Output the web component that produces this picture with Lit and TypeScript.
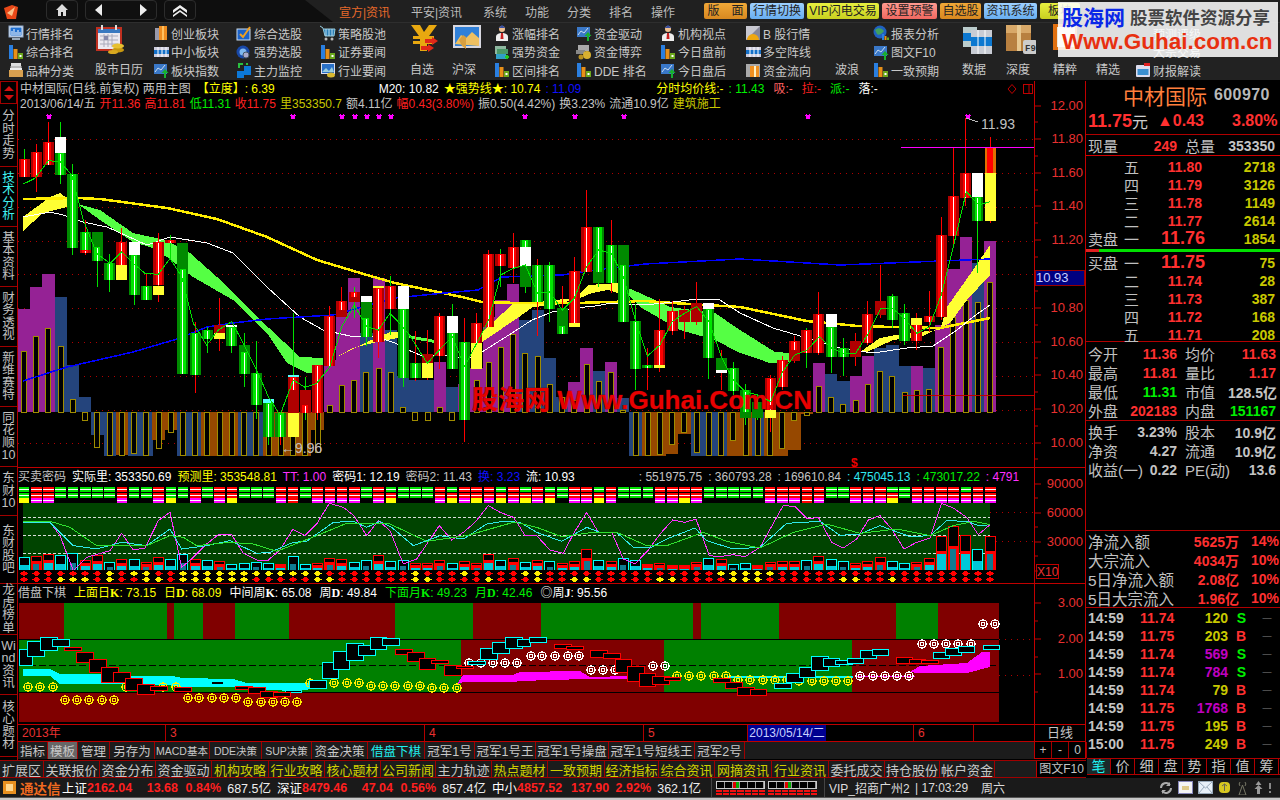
import { LitElement, html, svg, css } from 'lit';
import { customElement } from 'lit/decorators.js';

type Pt = [number, number];

const X = (i: number) => 24 + 12.23 * i;

// zoom coordinates (3x crops) to screen coordinates
const zp = (ox: number, oy: number, a: number[]): Pt[] => {
  const out: Pt[] = [];
  for (let i = 0; i < a.length; i += 2) out.push([ox + a[i] / 3, oy + a[i + 1] / 3]);
  return out;
};
const line = (pts: Pt[], color: string, w = 1) =>
  svg`<polyline points=${pts.map(p => p.join(',')).join(' ')} fill="none" stroke=${color} stroke-width=${w} />`;
const poly = (pts: Pt[], color: string) =>
  svg`<polygon points=${pts.map(p => p.join(',')).join(' ')} fill=${color} />`;

// wick top, wick bottom, wick colour, body segments
const CANDLES: [number, number, string, string][] = [
  [149, 177, 'g', 'R159-177'], [144, 192, 'r', 'R152-177'], [122, 165, 'r', 'R142-165'], [122, 184, 'g', 'W137-153 G153-175'],
  [164, 255, 'g', 'G174-248'], [220, 255, 'r', 'R250-253 G232-250'], [261, 287, 'g', 'g232-247 G247-261'], [254, 292, 'g', 'G263-280'],
  [228, 273, 'r', 'r242-260 Y260-280 R242-265'], [242, 305, 'g', 'W242-255 G255-295'], [273, 300, 'r', 'G286-300'], [233, 302, 'r', 'R242-285 Y286-295'],
  [235, 260, 'g', 'R240-243'], [243, 374, 'g', 'g243-269 G269-374'], [322, 393, 'r', 'G333-375'], [327, 353, 'g', 'G330-339'],
  [298, 351, 'r', 'r325-333 Y333-339'], [325, 353, 'g', 'W325-335 G327-346'], [333, 387, 'g', 'g345-352 G352-374'], [341, 419, 'g', 'G373-405'],
  [399, 445, 'g', 'C399-403 G403-437'], [420, 445, 'r', 'G413-437'], [313, 390, 'g', 'C375-390 R377-390 r390-413 Y413-437'], [377, 420, 'g', 'r390-405 R405-413'],
  [365, 420, 'r', 'R365-413'], [306, 366, 'r', 'R316-366'], [287, 317, 'r', 'r301-317 R301-310'], [287, 318, 'g', 'r292-302 R292-297'],
  [303, 346, 'g', 'W296-302 g302-318 G318-337'], [286, 358, 'r', 'Y286-342 R288-342'], [276, 335, 'g', 'R286-309'], [295, 387, 'g', 'W286-309 G309-378'],
  [331, 381, 'r', 'G363-378'], [330, 380, 'r', 'r354-363 Y363-378'], [313, 369, 'r', 'R316-356'], [304, 369, 'g', 'W316-333 G333-369'],
  [318, 442, 'r', 'G342-420'], [313, 369, 'r', 'R323-343 Y343-369'], [250, 327, 'r', 'R254-327'], [249, 287, 'g', 'R254-266'],
  [233, 283, 'r', 'R247-268'], [240, 293, 'g', 'G240-266 W247-266 g266-287'], [259, 336, 'r', 'G265-302'], [262, 322, 'g', 'G265-309'],
  [286, 308, 'r', 'g308-327 G326-334'], [257, 327, 'r', 'Y323-327 R271-323'], [190, 272, 'r', 'R227-272'], [227, 287, 'g', 'W227-272 G227-272 g272-283'],
  [220, 293, 'r', 'G245-283'], [245, 322, 'g', 'g245-265 G265-322'], [304, 390, 'g', 'G321-369'], [348, 390, 'r', 'G365-368'],
  [299, 372, 'r', 'R330-365 Y365-368'], [301, 335, 'r', 'R311-331'], [306, 339, 'r', 'r310-322'], [282, 325, 'r', 'r303-322'],
  [303, 379, 'g', 'W303-309 G309-358'], [350, 390, 'r', 'g358-370 W370-373'], [362, 395, 'g', 'G368-391'], [384, 425, 'g', 'g390-418 G390-412'],
  [395, 420, 'g', 'g402-418'], [375, 432, 'r', 'R378-410 Y410-418'], [356, 390, 'r', 'R360-387'], [336, 363, 'r', 'r341-361 R341-350'],
  [328, 368, 'g', 'R330-353'], [292, 355, 'r', 'R314-353'], [338, 373, 'g', 'W314-327 G327-357'], [338, 376, 'g', 'G348-357'],
  [333, 366, 'r', 'r341-357'], [301, 345, 'r', 'R314-343'], [265, 318, 'r', 'r301-315'], [294, 328, 'g', 'G296-320'],
  [304, 345, 'g', 'G313-341'], [313, 350, 'r', 'R318-341 Y318-325'], [291, 332, 'r', 'R316-322'], [217, 320, 'r', 'R235-317'],
  [147, 246, 'r', 'R196-236'], [118, 206, 'r', 'R173-198'], [173, 273, 'g', 'W173-197 G197-221'], [137, 223, 'r', 'Y173-221 O147-173'],
];

const BAR_COLOR: Record<string, string> = { p: '#952295', n: '#24447c', o: '#964800' };
// colour and reach from the baseline at y=412
const BARS: [string, number][] = [
  ['p', 309], ['p', 287], ['p', 274], ['n', 297], ['n', 365], ['n', 397], ['n', 435], ['n', 456], ['o', 455], ['n', 456],
  ['n', 456], ['o', 440], ['o', 430], ['n', 456], ['n', 456], ['o', 456], ['o', 456], ['o', 456], ['n', 456], ['n', 456],
  ['o', 456], ['o', 456], ['o', 456], ['o', 456], ['o', 430], ['p', 360], ['p', 313], ['p', 278], ['n', 333], ['p', 278],
  ['n', 330], ['n', 376], ['n', 380], ['n', 380], ['p', 362], ['n', 387], ['p', 384], ['p', 368], ['p', 317], ['p', 300],
  ['p', 284], ['n', 320], ['n', 310], ['n', 358], ['n', 397], ['p', 382], ['p', 348], ['n', 371], ['p', 362], ['n', 398],
  ['n', 456], ['o', 456], ['o', 456], ['o', 454], ['o', 434], ['n', 456], ['n', 456], ['n', 456], ['o', 456], ['o', 456],
  ['n', 456], ['o', 456], ['o', 456], ['o', 450], ['o', 414], ['p', 363], ['n', 374], ['n', 381], ['p', 376], ['p', 356],
  ['n', 348], ['n', 345], ['n', 366], ['p', 366], ['n', 368], ['p', 325], ['p', 269], ['p', 237], ['n', 263], ['p', 241],
];
const OLIVE = [
  351, 336, 328, 346, 399, 420, 447, 455, 455, 453, 455, 448, 432, 455, 455, 455, 455, 455, 455, 455,
  455, 455, 455, 455, 452, 405, 385, 380, 372, 368, 372, 407, 420, 420, 407, 420, 405, 380, 362, 347,
  334, 353, 356, 384, 397, 400, 364, 381, 372, 410, 455, 455, 454, 444, 432, 452, 455, 455, 440, 455,
  455, 455, 448, 420, 415, 386, 397, 404, 400, 384, 371, 376, 392, 390, 389, 347, 317, 300, 302, 282,
];

const RED1 = new Set([1, 2, 8, 11, 14, 16, 17, 21, 22, 24, 25, 26, 27, 29, 34, 36, 37, 38, 40, 42, 45, 46, 48, 52, 53, 54, 55, 61, 62, 63, 64, 65, 68, 69, 70, 73, 74, 75, 76, 78, 79]);
const EXTRA2 = new Set([30, 35, 39, 41, 43, 47, 71, 77]);
const YEL3 = new Set([0, 12, 17, 30, 35, 37, 39, 41, 43, 47, 54, 71]);
const MAG3 = new Set([1, 2, 8, 11, 14, 16, 21, 24, 25, 26, 27, 29, 34, 36, 38, 40, 42, 45, 46, 48, 52, 53, 55, 61, 62, 63, 65, 68, 69, 70, 73, 74, 75, 76, 77, 78, 79]);

// zy of the top of each volume bar, c = cyan outline, r = red outline
const VOL: [number, string][] = [
  [280, 'c'], [276, 'r'], [270, 'r'], [274, 'c'], [268, 'c'], [290, 'r'], [275, 'r'], [295, 'c'], [287, 'r'], [286, 'c'],
  [295, 'r'], [280, 'r'], [286, 'c'], [270, 'c'], [286, 'r'], [288, 'c'], [292, 'r'], [300, 'c'], [298, 'c'], [295, 'c'],
  [298, 'c'], [300, 'r'], [278, 'c'], [300, 'c'], [298, 'r'], [282, 'r'], [286, 'r'], [295, 'c'], [288, 'c'], [274, 'r'],
  [292, 'c'], [288, 'c'], [298, 'r'], [298, 'r'], [288, 'r'], [297, 'c'], [292, 'r'], [298, 'r'], [270, 'r'], [288, 'c'],
  [282, 'r'], [294, 'c'], [288, 'r'], [292, 'c'], [298, 'r'], [292, 'r'], [256, 'r'], [288, 'c'], [292, 'r'], [282, 'c'],
  [288, 'c'], [300, 'r'], [298, 'r'], [304, 'r'], [304, 'r'], [294, 'r'], [282, 'c'], [286, 'r'], [300, 'c'], [298, 'c'],
  [304, 'r'], [294, 'r'], [292, 'r'], [292, 'r'], [288, 'c'], [276, 'r'], [286, 'c'], [292, 'c'], [298, 'r'], [292, 'r'],
  [280, 'r'], [292, 'c'], [298, 'c'], [294, 'r'], [282, 'r'], [216, 'r'], [186, 'r'], [214, 'r'], [256, 'c'], [216, 'r'],
];
const DOT1 = 'RRRRRRRYRYYRRYYYYYYYYYYYYRRRRRRRYRRRYRRRRYYRRRRRRRRRRRRRRYYYYYRRRRRRRRRRRRRRRRRR';
const DOT2 = 'RRRYYYRYRRYYRYYYYYYRRRRRYYRRRRRRYYRRRRYRRRYRRYYRRRRRYYRRRRYYYRRRRRRYYRRYRRRRRRRR';

// x, y, w, h of the boxes in the bottom pane
const BOX_C: number[][] = [
  [19, 650, 13, 16], [27, 642, 17, 15], [40, 638, 17, 13], [52, 640, 17, 7], [285, 691, 16, 2], [309, 681, 17, 8], [322, 663, 16, 16], [333, 652, 16, 18],
  [346, 644, 17, 17], [358, 646, 17, 10], [370, 638, 16, 12], [382, 639, 17, 7], [468, 662, 17, 3], [480, 649, 17, 11], [492, 643, 17, 11], [505, 638, 17, 11],
  [517, 640, 13, 7], [529, 638, 17, 5], [774, 684, 17, 5], [786, 674, 17, 9], [799, 668, 16, 10], [811, 657, 17, 14], [823, 659, 16, 8], [835, 661, 17, 4],
  [847, 659, 16, 5], [860, 651, 16, 8], [872, 650, 16, 6], [933, 653, 16, 6], [945, 649, 16, 7], [958, 647, 16, 6], [983, 646, 16, 4],
];
const BOX_R: number[][] = [
  [64, 648, 17, 3], [76, 653, 17, 10], [89, 660, 17, 13], [101, 668, 17, 15], [113, 673, 17, 10], [125, 679, 17, 12], [137, 685, 17, 10], [150, 687, 17, 4],
  [174, 688, 17, 4], [235, 687, 17, 3], [248, 688, 17, 6], [260, 692, 17, 6], [273, 693, 17, 4], [395, 650, 17, 5], [407, 653, 17, 9], [419, 659, 16, 11],
  [431, 661, 17, 3], [444, 666, 17, 10], [456, 667, 17, 2], [554, 645, 17, 4], [566, 647, 17, 3], [590, 651, 17, 7], [603, 654, 17, 5], [615, 660, 16, 13],
  [627, 667, 17, 15], [639, 674, 16, 13], [652, 677, 17, 8], [664, 678, 16, 3], [713, 679, 17, 4], [725, 683, 17, 6], [737, 688, 17, 8], [750, 690, 16, 6],
  [896, 658, 16, 6], [909, 660, 16, 4], [921, 661, 17, 3],
];
const RINGS_Y: [number, number[]][] = [
  [688, [28, 40, 53, 126, 163, 176]], [701, [65, 77, 89, 102, 114]], [699, [188, 199, 212, 224, 236]], [703, [248, 261, 273, 285, 297]],
  [684, [310, 334, 347, 359]], [687, [371, 383, 395, 408, 420]], [689, [432, 444, 457]],
  [677, [677, 689, 701, 714, 726]], [681, [738, 750, 763, 775, 787]], [682, [799, 812, 824, 836, 848]],
];
const RINGS_W: [number, number[]][] = [
  [664, [469, 481, 493, 505, 517]], [657, [531, 542, 555, 568, 579]], [671, [591, 603, 615]], [667, [653, 665]],
  [677, [860, 873, 885, 897, 909]], [645, [922, 934, 946, 958, 971]], [625, [983, 995]],
];

const segColor: Record<string, string[]> = {
  R: ['#b00000', '#ff0000', '#ffffff'], r: ['#b00000', '#b00000', ''], G: ['#008a00', '#00e600', '#ffffff'], g: ['#008a00', '#008a00', ''],
  W: ['#ffffff', '#ffffff', ''], Y: ['#ffff33', '#ffff33', ''], C: ['#55ffff', '#55ffff', ''], O: ['#e07000', '#ff0000', ''],
};

const candle = (c: [number, number, string, string], i: number) => {
  const x = X(i);
  const segs = [...c[3].matchAll(/([A-Za-z])(\d+)-(\d+)/g)];
  return svg`
    <line x1=${x} x2=${x} y1=${c[0]} y2=${c[1]} stroke=${c[2] === 'r' ? '#ff0000' : '#00e000'} />
    ${segs.map(m => {
      const [edge, mid, core] = segColor[m[1]];
      const t = +m[2];
      const h = +m[3] - t;
      return svg`<rect x=${x - 5.5} y=${t} width="11" height=${h} fill=${edge} />
        <rect x=${x - 3} y=${t} width="6" height=${h} fill=${mid} />
        ${core ? svg`<rect x=${x - 0.5} y=${t + 1} width="1" height=${h - 1} fill=${core} />` : ''}`;
    })}`;
};

const mainChart = () => {
  const grid = [139, 173, 207, 241, 274, 308, 342, 376, 410, 443];
  const marks = [49, 293, 342, 355, 367, 379, 391, 525, 575, 624, 808, 968];
  const green = [
    ...zp(0, 100, [70, 252, 105, 235, 145, 182, 180, 185, 215, 225, 250, 360, 290, 460, 330, 490, 365, 455, 400, 490, 435, 520, 475, 523, 510, 475, 545, 530, 580, 670, 620, 735, 655, 690, 695, 665, 730, 730, 770, 810, 805, 890, 840, 945, 880, 840, 915, 862, 950, 850, 990, 800, 1025, 680, 1063, 615, 1100, 680, 1135, 690, 1170, 640]),
    ...zp(395, 180, [0, 415, 40, 460, 97, 550, 133, 510, 172, 470, 208, 560, 245, 490, 281, 420, 317, 285, 355, 265, 391, 255, 428, 340, 463, 335, 502, 390, 538, 355, 575, 260, 611, 210, 649, 220, 685, 290, 721, 420]),
    ...zp(640, 100, [22, 768, 60, 735, 97, 665, 133, 640, 170, 620, 207, 665, 244, 770, 280, 840, 316, 875, 354, 885, 392, 905, 428, 815, 464, 765, 502, 750, 538, 710, 575, 745, 611, 760, 647, 760, 685, 700, 722, 625, 757, 625, 793, 655, 831, 700, 868, 680, 904, 585, 940, 440, 979, 275, 1016, 315, 1050, 305]),
  ];
  return html`<svg class="chart" viewBox="18 110 1016 358" width="1016" height="358">
    ${grid.map(y => svg`<line x1="18" x2="1034" y1=${y} y2=${y} stroke="#b00000" stroke-dasharray="1 5" />`)}
    ${BARS.map(([c, y], i) => svg`<rect x=${X(i) - 6.1} y=${Math.min(y, 412)} width="12.3" height=${Math.abs(412 - y)} fill=${BAR_COLOR[c]} />`)}
    ${OLIVE.map((y, i) => svg`<rect x=${X(i) - 2.5} y=${Math.min(y, 412)} width="5" height=${Math.abs(412 - y)} fill="#000" stroke="#a08c00" />`)}
    ${poly([[78, 204], [100, 210], [133, 233], [165, 240], [190, 253], [217, 277], [253, 313], [300, 357], [323, 358], [323, 373], [307, 373], [287, 363], [267, 333], [233, 300], [193, 277], [167, 257], [150, 247], [133, 242], [100, 220]], '#55ff44')}
    ${poly([[408, 335], [435, 340], [435, 343], [408, 338]], '#55ff44')}
    ${poly([[628, 288], [640, 293], [670, 307], [715, 313], [740, 330], [775, 352], [790, 353], [790, 362], [770, 363], [740, 353], [715, 340], [680, 330], [640, 307], [628, 295]], '#55ff44')}
    ${poly([[23, 217], [50, 197], [60, 193], [75, 204], [67, 207], [43, 213], [23, 231]], '#ffff33')}
    ${poly([[335, 358], [367, 342], [390, 332], [398, 332], [398, 338], [377, 342], [353, 348]], '#ffff33')}
    ${poly([[482, 332], [513, 304], [555, 300], [575, 298], [588, 285], [618, 283], [625, 288], [625, 295], [608, 290], [592, 293], [580, 298], [555, 305], [533, 307], [519, 317], [488, 338], [482, 342]], '#ffff33')}
    ${poly([[860, 352], [880, 338], [907, 333], [940, 330], [947, 307], [973, 270], [990, 245], [990, 275], [967, 300], [950, 323], [923, 336], [893, 340], [867, 352]], '#ffff33')}
    ${line([[23, 199], [77, 198], [100, 199], [167, 208], [217, 219], [267, 237], [317, 260], [367, 275], [395, 283], [428, 290], [462, 297], [482, 302], [519, 303], [578, 303], [608, 302], [645, 301], [673, 303], [740, 307], [807, 321], [857, 326], [893, 327], [940, 328], [990, 318]], '#ffee00', 2.5)}
    ${line([[23, 217], [50, 212], [63, 215], [83, 222], [107, 227], [147, 245], [170, 237], [207, 243], [233, 253], [267, 287], [300, 317], [323, 330], [350, 336], [377, 337], [395, 343], [408, 350], [420, 355], [435, 355], [470, 358], [482, 352], [512, 333], [532, 320], [552, 312], [575, 308], [595, 306], [612, 303], [645, 305], [673, 302], [697, 299], [720, 300], [740, 313], [773, 328], [807, 338], [840, 348], [873, 353], [907, 348], [933, 346], [957, 330], [973, 317], [990, 305]], '#ffffff')}
    ${line([[23, 381], [67, 367], [133, 352], [177, 339], [207, 327], [233, 323], [267, 319], [333, 315], [395, 298], [445, 293], [478, 290], [502, 277], [562, 275], [595, 270], [645, 264], [740, 259], [840, 265], [940, 261], [990, 259]], '#0000ff', 1.5)}
    ${CANDLES.map(candle)}
    ${line(green, '#00e000')}
    ${marks.map(x => svg`<path d="M${x - 2} 115l4 4m0-4l-4 4" stroke="#ff00ff" stroke-width="1.5" />`)}
    <line x1="901" x2="1034" y1="147" y2="147" stroke="#ff00ff" />
    <line x1="903" x2="1034" y1="395" y2="395" stroke="#c00000" />
    <path d="M966 118l12 4" stroke="#bbb" fill="none" />
    <text x="981" y="129" class="t-grey">11.93</text>
    <text x="281" y="453" class="t-grey">←9.96</text>
    <text x="851" y="467" class="t-s">$</text>
    <text x="472" y="409" class="t-mark">股海网 Www.Guhai.Com.CN</text>
  </svg>`;
};

const midChart = () => {
  const dy = (zy: number) => 465 + zy / 3;
  const mag = [...zp(0, 465, [70, 175, 150, 175, 180, 215, 220, 320, 260, 280, 330, 260, 365, 208, 400, 258, 435, 252, 475, 170, 510, 145, 545, 310, 580, 280, 620, 240, 655, 212, 695, 212, 730, 268, 770, 288, 805, 288, 840, 258, 878, 196, 915, 215, 950, 180, 988, 118, 1030, 130, 1062, 155, 1100, 215, 1135, 170, 1170, 200, 1210, 300, 1250, 285, 1318, 185, 1355, 228, 1390, 205, 1425, 175, 1465, 125, 1500, 145, 1540, 160]),
    ...zp(520, 465, [0, 190, 15, 215, 50, 215, 90, 258, 130, 268, 160, 210, 200, 145, 235, 205, 275, 205, 310, 285, 345, 300, 385, 258, 420, 210, 458, 168, 495, 175, 528, 165, 568, 275, 600, 278, 640, 272, 675, 278, 720, 250, 790, 124, 825, 128, 862, 165, 895, 160, 935, 235, 970, 252, 1010, 225, 1045, 168, 1080, 155, 1115, 195, 1152, 255, 1190, 235, 1230, 222, 1265, 118, 1300, 132, 1340, 160, 1375, 212, 1410, 182])];
  const cyan = [...zp(0, 465, [70, 175, 150, 175, 180, 205, 220, 245, 290, 255, 365, 235, 440, 245, 510, 195, 545, 255, 620, 245, 690, 230, 770, 268, 810, 265, 880, 235, 920, 232, 1000, 175, 1060, 172, 1100, 190, 1140, 172, 1175, 190, 1240, 245, 1320, 215, 1390, 225, 1460, 180, 1510, 172]),
    ...zp(520, 465, [0, 175, 50, 205, 125, 232, 200, 190, 240, 205, 290, 205, 340, 250, 390, 252, 440, 225, 525, 192, 560, 230, 640, 255, 720, 250, 800, 178, 900, 172, 960, 214, 1020, 210, 1080, 185, 1170, 218, 1230, 215, 1280, 170, 1340, 172, 1380, 186, 1410, 182])];
  const grn = [...zp(0, 465, [70, 172, 150, 172, 210, 190, 290, 245, 360, 245, 440, 245, 510, 215, 550, 220, 590, 245, 690, 235, 760, 240, 830, 262, 950, 215, 1040, 178, 1170, 180, 1280, 232, 1400, 215, 1540, 175]),
    ...zp(520, 465, [0, 178, 50, 190, 125, 218, 220, 205, 290, 205, 380, 245, 440, 245, 550, 205, 620, 232, 720, 252, 820, 205, 920, 180, 1020, 208, 1130, 195, 1230, 215, 1300, 185, 1360, 172, 1410, 182])];
  return html`<svg class="chart" viewBox="18 487 1016 97" width="1016" height="97">
    <rect x="23" y="504" width="967" height="67" fill="#004400" />
    ${[513, 542].map(y => svg`<line x1="990" x2="1034" y1=${y} y2=${y} stroke="#b00000" stroke-dasharray="1 5" />`)}
    ${[518, 536, 554].map(y => svg`<line x1="23" x2="990" y1=${y} y2=${y} stroke="#ddd" stroke-dasharray="3 2" />`)}
    ${CANDLES.map((_, i) => {
      const x = X(i) - 5.2;
      const r1 = RED1.has(i);
      const r2 = r1 || EXTRA2.has(i);
      const c3 = YEL3.has(i) ? '#ffff00' : MAG3.has(i) ? '#ff00ff' : i === 22 || i === 64 ? '#ff0000' : '';
      return svg`
        <rect x=${x} y="488" width="10.6" height="5" fill=${r1 ? '#ff0000' : '#00e000'} /><rect x=${x} y="490" width="10.6" height="1" fill="#fff" />
        <rect x=${x} y="494" width="10.6" height="5" fill=${r2 ? '#ff0000' : '#00e000'} /><rect x=${x} y="496" width="10.6" height="1" fill="#fff" />
        ${c3 ? svg`<rect x=${x} y="499" width="10.6" height="5" fill=${c3} /><rect x=${x} y="501" width="10.6" height=${c3 === '#ffff00' ? 0 : 1} fill="#fff" />` : ''}`;
    })}
    ${VOL.map(([zy, c], i) => {
      const x = X(i) - 5;
      const top = dy(zy);
      const fillTop = (top + 571) / 2 + 1;
      const teal = i % 3 === 1;
      return svg`<rect x=${x} y=${top} width="10" height=${571 - top} fill="#000" stroke=${c === 'c' ? '#00ffff' : '#ff0000'} />
        ${c === 'r' ? svg`<rect x=${x} y=${fillTop - 3} width="10" height=${574 - fillTop} fill="#ff0000" />` : ''}
        <rect x=${x + (teal ? 2 : 0.5)} y=${fillTop} width=${teal ? 6 : 9} height=${571 - fillTop} fill=${teal ? '#107a90' : '#00c8d8'} />`;
    })}
    ${line(mag, '#ff30ff')}
    ${line(cyan, '#30e8e8')}
    ${line(grn, '#30e030')}
    <rect x="18" y="571" width="978" height="13" fill="#000" />
    ${CANDLES.map((_, i) => svg`
      <path d="M${X(i) - 4} 574.5l4-3 4 3-4 3z" fill=${DOT1[i] === 'R' ? '#ff0000' : '#ffee00'} />
      <path d="M${X(i) - 4} 580.5l4-3 4 3-4 3z" fill=${DOT2[i] === 'R' ? '#ff0000' : '#ffee00'} />`)}
  </svg>`;
};

const lowChart = () => {
  const topGreen = [[64, 103], [174, 29], [235, 54], [395, 78], [541, 152], [701, 78], [896, 42]];
  const ring = (x: number, y: number, c: string) => svg`<circle cx=${x} cy=${y} r="4" fill="none" stroke=${c} stroke-width="1.3" /><circle cx=${x} cy=${y} r="1.8" fill="none" stroke=${c} />`;
  const box = (b: number[], c: string) => svg`<rect x=${b[0]} y=${b[1]} width=${b[2]} height=${b[3]} fill="#000" stroke=${c} />`;
  return html`<svg class="chart" viewBox="18 603 1016 122" width="1016" height="122">
    <rect x="19" y="604" width="980" height="119" fill="#800000" />
    ${topGreen.map(g => svg`<rect x=${g[0]} y="604" width=${g[1]} height="36" fill="#008000" />`)}
    <rect x="19" y="640" width="442" height="53" fill="#008000" />
    <rect x="664" y="640" width="188" height="53" fill="#008000" />
    ${[640, 676].map(y => svg`<line x1="999" x2="1034" y1=${y} y2=${y} stroke="#b00000" stroke-dasharray="1 5" />`)}
    <line x1="19" x2="999" y1="640" y2="640" stroke="#000" />
    <line x1="19" x2="999" y1="666" y2="666" stroke="#000" stroke-dasharray="7 3" />
    <line x1="19" x2="999" y1="693" y2="693" stroke="#000" />
    ${poly([[23, 670], [50, 670], [60, 675], [100, 675], [133, 677], [173, 677], [182, 679], [233, 680], [247, 684], [313, 684], [313, 690], [293, 692], [247, 690], [233, 688], [182, 688], [167, 686], [123, 685], [60, 685], [50, 677], [23, 677]], '#00ffff')}
    ${poly([[457, 685], [463, 676], [513, 676], [520, 673], [580, 672], [590, 678], [630, 677], [630, 680], [585, 680], [520, 682], [513, 683], [463, 683]], '#ff00ff')}
    ${poly([[910, 673], [920, 667], [967, 664], [982, 653], [990, 653], [990, 668], [967, 674], [917, 674]], '#ff00ff')}
    <rect x="727" y="677" width="126" height="2" fill="#00ffff" />
    <rect x="855" y="677" width="60" height="1" fill="#ff00ff" />
    ${RINGS_Y.map(([y, xs]) => xs.map(x => ring(x, y, '#ffee00')))}
    ${RINGS_W.map(([y, xs]) => xs.map(x => ring(x, y, '#ffffff')))}
    <rect x="212" y="683" width="11" height="2" fill="#000" />
    ${BOX_C.map(b => box(b, '#00ffff'))}
    ${BOX_R.map(b => box(b, '#ff0000'))}
  </svg>`;
};

const axis = (y0: number, h: number, labels: [string, number][], ticks: number[]) => html`
  <svg class="axis" viewBox="1034 ${y0} 52 ${h}" width="52" height=${h}>
    <line x1="1034.5" x2="1034.5" y1=${y0} y2=${y0 + h} stroke="#c00000" />
    <line x1="1085.5" x2="1085.5" y1=${y0} y2=${y0 + h} stroke="#c00000" />
    ${ticks.map(y => svg`<line x1="1034" x2="1038" y1=${y} y2=${y} stroke="#c00000" />`)}
    ${labels.map(([t, y]) => svg`<line x1="1034" x2="1041" y1=${y} y2=${y} stroke="#c00000" /><text x="1083" y=${y + 4} text-anchor="end" class="t-axis">${t}</text>`)}
  </svg>`;

/* ---- small toolbar icons ---- */
const ic = (body: unknown, w = 16, h = 16, vb = '0 0 16 16') => html`<svg class="ic" width=${w} height=${h} viewBox=${vb}>${body}</svg>`;
const ICONS: Record<string, unknown> = {
  monitor: ic(svg`<rect x="1" y="1" width="14" height="11" fill="#dfe8f5" stroke="#8fa9cc"/><rect x="2.5" y="2.5" width="11" height="8" fill="#1f6fd0"/><path d="M4 10V6m2 4V4m2 6V7m2 3V5m2 5V7" stroke="#fff"/><rect x="4" y="13" width="8" height="2" fill="#9ab"/>`),
  bars: ic(svg`<rect x="1" y="1" width="4" height="14" fill="#2a7fe0"/><rect x="5.5" y="5" width="4" height="10" fill="#e89018"/><rect x="10" y="9" width="5" height="6" fill="#6aa81c"/><rect x="11.5" y="11" width="2" height="2" fill="#fff"/>`),
  box: ic(svg`<rect x="1" y="8" width="14" height="7" fill="#d8a050"/><rect x="3" y="1" width="10" height="3" fill="#ddd"/><rect x="2.5" y="4" width="11" height="2" fill="#bbb"/><rect x="2" y="6" width="12" height="2" fill="#eee"/>`),
  doc: ic(svg`<rect x="2" y="3" width="12" height="12" fill="#99a"/><rect x="6" y="1" width="8" height="14" fill="#ee8c20"/><rect x="9" y="1" width="2" height="14" fill="#ffc060"/>`),
  table: ic(svg`<rect x="1" y="3" width="15" height="10" fill="#ccd"/><rect x="1" y="6" width="15" height="4" fill="#1470c8"/><path d="M5 3v10m4-10v10m4-10v10" stroke="#fff"/>`),
  up: ic(svg`<rect x="1" y="2" width="13" height="10" fill="#3a78c8"/><path d="M2 10l3-4 3 2 4-5" stroke="#cde" fill="none"/><path d="M11 16V11H8.5L12 7l3.500 4H13v5z" fill="#18b030"/>`),
  check: ic(svg`<rect x="1" y="4" width="13" height="11" fill="#1c62c8" stroke="#cde"/><path d="M4 9l3 3 7-10" stroke="#f0a020" stroke-width="2" fill="none"/>`),
  globe: ic(svg`<circle cx="7" cy="8" r="6.500" fill="#1848a8"/><circle cx="7" cy="8" r="3.500" fill="#7fb8ef"/><circle cx="10" cy="11" r="3" fill="#aac" stroke="#456"/>`),
  flow: ic(svg`<rect x="1" y="9" width="7" height="7" fill="#0c78d8"/><rect x="8" y="4" width="7" height="9" fill="#0c78d8"/><path d="M3 6V2h4M11 3V1" stroke="#2ac040" stroke-width="2" fill="none"/>`),
  cart: ic(svg`<path d="M0 1l3 2 2 8h9l1-7H4" fill="#2a7fb8" stroke="#9cd"/><path d="M6 4v7m3-7v7m3-7v7" stroke="#bde"/><circle cx="6" cy="14" r="1.500" fill="#bbb"/><circle cx="12" cy="14" r="1.500" fill="#bbb"/>`),
  gold: ic(svg`<rect x="1" y="1" width="14" height="11" fill="#dde" /><rect x="2" y="2" width="12" height="9" fill="#2a70c8"/><path d="M2 10l4-4 3 3 3-4 2 5z" fill="#9cd"/><ellipse cx="11" cy="13" rx="4" ry="2.500" fill="#d8b830"/>`),
  person: ic(svg`<circle cx="8" cy="4" r="3" fill="#f0c090"/><path d="M4.500 3l3.500-3 3.500 3z" fill="#3a50a0"/><path d="M2 16v-4c0-3 3-4 6-4s6 1 6 4v4z" fill="#eee"/><path d="M7 8h2l.5 6H6.500z" fill="#c82020"/>`),
  cash: ic(svg`<rect x="1" y="2" width="11" height="8" fill="#8fb8a0"/><rect x="3" y="5" width="11" height="5" fill="#4a9868"/><rect x="2" y="10" width="10" height="5" fill="#30a0c8"/><path d="M11 13h4m-2-2v4" stroke="#2c2" stroke-width="2"/>`),
  coins: ic(svg`<rect x="2" y="1" width="11" height="6" fill="#aaa"/><rect x="0" y="6" width="9" height="4" fill="#888"/><circle cx="11" cy="11" r="4" fill="#d8b030"/><circle cx="5" cy="13" r="2.500" fill="#b89020"/>`),
  sun: ic(svg`<rect x="1" y="1" width="14" height="14" fill="#c8c8d0"/><path d="M1 15L15 1v14z" fill="#889"/><path d="M2 15a6 6 0 0112 0z" fill="#f0a810"/>`),
  orange: ic(svg`<rect x="1" y="2" width="14" height="13" fill="#aaa"/><rect x="5" y="4" width="9" height="11" fill="#f09020"/><rect x="9" y="4" width="2" height="11" fill="#fff0c0"/>`),
  ball: ic(svg`<circle cx="7" cy="7" r="6.500" fill="#2060c0"/><path d="M2 5c3-3 7-2 9 1-2 3-6 5-7 3z" fill="#40a060"/><rect x="9" y="9" width="2" height="6" fill="#2a7fe0"/><rect x="11.500" y="11" width="2" height="4" fill="#e89018"/><rect x="14" y="12.500" width="2" height="2.500" fill="#6aa81c"/>`),
  report: ic(svg`<rect x="1" y="3" width="14" height="12" rx="1" fill="#dde"/><rect x="2.500" y="7" width="11" height="6" fill="#3a8fd0"/><rect x="9" y="1" width="6" height="3" fill="#e02020"/>`),
};

const BIG: Record<string, unknown> = {
  cal: ic(svg`<rect x="1" y="3" width="26" height="24" fill="#c03020"/><rect x="3" y="5" width="22" height="20" fill="#ece8f0"/><rect x="3" y="5" width="22" height="4" fill="#3a78c0"/>
    <path d="M7 1v5m14-5v5" stroke="#ddd" stroke-width="2"/><path d="M5 12h18M5 16h18M5 20h18M9 10v13m4-13v13m4-13v13" stroke="#aab"/><rect x="9" y="12" width="4" height="4" fill="#88a"/>
    <ellipse cx="23" cy="26" rx="6" ry="2.500" fill="#c89810"/><ellipse cx="23" cy="22" rx="6" ry="2.500" fill="#e8c030"/><ellipse cx="18" cy="28" rx="5" ry="2" fill="#d8a820"/>`, 30, 30, '0 0 30 30'),
  yen: ic(svg`<path d="M1 1h9l4 7 5-7h8l-8 11h5v3h-7v2h7v3h-7v7h-7v-7H3v-3h7v-2H3v-3h6z" fill="#e8a810"/><path d="M15 15h7v-2l6 4-6 4v-2h-7zM11 22h7v-2l6 4-6 4v-2h-7z" fill="#e02818"/>`, 30, 30, '0 0 30 30'),
  map: ic(svg`<rect x="1" y="1" width="28" height="23" fill="#d8d8e0"/><rect x="3" y="3" width="24" height="19" fill="#3080d8"/><path d="M3 20l6-9 5 3 6-6 7 6v8z" fill="#eec060"/><path d="M7 16l4-5 3 2v12l-4-3z" fill="#d8a040"/>`, 30, 30, '0 0 30 30'),
  data: ic(svg`<rect x="1" y="3" width="14" height="20" fill="#bcc"/><rect x="1" y="9" width="14" height="8" fill="#0c78d0"/><rect x="9" y="6" width="21" height="24" fill="#c8ccd4"/><rect x="9" y="13" width="21" height="9" fill="#0c78d0"/><path d="M16 6v24m7-24v24" stroke="#fff"/>`, 30, 30, '0 0 30 30'),
  pack: ic(svg`<rect x="0" y="1" width="25" height="26" fill="#b88040"/><rect x="0" y="1" width="25" height="8" fill="#d8a868"/><rect x="11" y="1" width="4" height="26" fill="#e8c890"/><rect x="17" y="16" width="14" height="14" rx="2" fill="#ccc"/><text x="19" y="27" font-size="9" font-weight="700" fill="#333" font-family="Liberation Mono">F9</text>`, 30, 30, '0 0 30 30'),
  note: ic(svg`<rect x="0" y="0" width="24" height="26" fill="#e07010"/><rect x="4" y="3" width="18" height="20" fill="#f0e8d8"/>`, 26, 30, '0 0 26 30'),
};

const RIBBON: ([string, string][] | [string, string])[] = [
  [['monitor', '行情排名'], ['bars', '综合排名'], ['box', '品种分类']],
  ['cal', '股市日历'],
  [['doc', '创业板块'], ['table', '中小板块'], ['up', '板块指数']],
  [['check', '综合选股'], ['globe', '强势选股'], ['flow', '主力监控']],
  [['cart', '策略股池'], ['bars', '证券要闻'], ['gold', '行业要闻']],
  ['yen', '自选'],
  ['map', '沪深'],
  [['person', '涨幅排名'], ['cash', '强势资金'], ['bars', '区间排名']],
  [['up', '资金驱动'], ['coins', '资金博弈'], ['bars', 'DDE 排名']],
  [['person', '机构视点'], ['bars', '今日盘前'], ['up', '今日盘后']],
  [['sun', 'B 股行情'], ['table', '多空阵线'], ['orange', '资金流向']],
  ['', '波浪'],
  [['ball', '报表分析'], ['up', '图文F10'], ['bars', '一致预期']],
  ['data', '数据'],
  ['pack', '深度'],
  ['note', '精粹'],
  ['', '精选'],
  [['', '预测评级'], ['', '大宗交易'], ['report', '财报解读']],
];

const SIDE: [string[], number, boolean?][] = [
  [['分', '时', '走', '势'], 63], [['技', '术', '分', '析'], 60, true], [['基', '本', '资', '料'], 60], [['财', '务', '透', '视'], 60],
  [['新', '维', '赛', '特'], 60], [['同', '花', '顺', '10'], 60], [['东', '财', '10'], 49], [['东', '财', '股', '吧'], 68],
  [['龙', '虎', '榜', '单'], 51], [['Wi', 'nd', '资', '讯'], 60], [['核', '心', '题', '材'], 62],
];

const TAB1: [string, number, string?][] = [
  ['指标', 30], ['模板', 30, 'sel'], ['管理', 32], ['另存为', 45], ['MACD基本', 55, 'nr'], ['DDE决策', 52, 'nr'], ['SUP决策', 50, 'nr'], ['资金决策', 56], ['借盘下棋', 57, 'cy'],
  ['冠军1号', 50], ['冠军1号王', 61], ['冠军1号操盘', 73], ['冠军1号短线王', 86], ['冠军2号', 50],
];
const TAB2: [string, number, string?][] = [
  ['扩展区', 44], ['关联报价', 56], ['资金分布', 56], ['资金驱动', 56], ['机构攻略', 57, 'ol'], ['行业攻略', 56, 'ol'], ['核心题材', 56, 'ol'], ['公司新闻', 55, 'ol'], ['主力轨迹', 56],
  ['热点题材', 56, 'ol'], ['一致预期', 57, 'ol'], ['经济指标', 54, 'ol'], ['综合资讯', 56, 'ol'], ['网摘资讯', 57, 'ol'], ['行业资讯', 57, 'ol'], ['委托成交', 56], ['持仓股份', 55], ['帐户资金', 55],
];

const TOPBTN: [string, string, number][] = [
  ['版　面', 'b-or', 43], ['行情切换', 'b-bl', 54], ['VIP闪电交易', 'b-ye', 72], ['设置预警', 'b-pk', 55], ['自选股', 'b-or', 41], ['资讯系统', 'b-bl', 53], ['板块', 'b-ye', 40],
];

const ASKS: [string, string, string, string?][] = [
  ['', '五', '11.80', '2718'], ['', '四', '11.79', '3126'], ['', '三', '11.78', '1149'], ['', '二', '11.77', '2614'], ['卖盘', '一', '11.76', '1854'],
];
const BIDS: [string, string, string, string?][] = [
  ['买盘', '一', '11.75', '75'], ['', '二', '11.74', '28'], ['', '三', '11.73', '387'], ['', '四', '11.72', '168'], ['', '五', '11.71', '208'],
];
const STATS: [string, string, string, string, string, string][] = [
  ['今开', '11.36', 'red', '均价', '11.63', 'red'], ['最高', '11.81', 'red', '量比', '1.17', 'red'],
  ['最低', '11.31', 'grn', '市值', '128.5亿', 'gry'], ['外盘', '202183', 'red', '内盘', '151167', 'grn'],
];
const STATS2: [string, string, string, string][] = [
  ['换手', '3.23%', '股本', '10.9亿'], ['净资', '4.27', '流通', '10.9亿'], ['收益(一)', '0.22', 'PE(动)', '13.6'],
];
const FLOW: [string, string, string][] = [
  ['净流入额', '5625万', '14%'], ['大宗流入', '4034万', '10%'], ['5日净流入额', '2.08亿', '10%'], ['5日大宗流入', '1.96亿', '10%'],
];
const TRADES: [string, string, string, string, string][] = [
  ['14:59', '11.74', '120', 'S', 'ol'], ['14:59', '11.75', '203', 'B', 'ol'], ['14:59', '11.74', '569', 'S', 'mg'], ['14:59', '11.74', '784', 'S', 'mg'],
  ['14:59', '11.74', '79', 'B', 'ol'], ['14:59', '11.75', '1768', 'B', 'mg'], ['14:59', '11.75', '195', 'B', 'ol'], ['15:00', '11.75', '249', 'B', 'ol'],
];

@customElement('app-root')
export class AppRoot extends LitElement {
  private renderRibbon() {
    return html`<div class="ribbon">
      ${RIBBON.map(col => {
        if (typeof col[0] === 'string') {
          const [k, t] = col as [string, string];
          return html`<div class="rb-big"><div class="rb-img">${BIG[k] ?? ''}</div><span>${t}</span></div>`;
        }
        return html`<div class="rb-col">
          ${(col as [string, string][]).map(([k, t]) => html`<div class="rb-row"><i class="rb-ic">${ICONS[k] ?? ''}</i><span>${t}</span></div>`)}
        </div>`;
      })}
    </div>`;
  }

  private renderTop() {
    return html`<div class="top">
      <svg class="logo" width="16" height="16" viewBox="0 0 16 16"><path d="M1 4l8-3 6 2-2 12-9 0z" fill="#e84818"/><path d="M4 9l8-6-3 9z" fill="#f8c088"/></svg>
      <div class="navs">
        <button class="nv nv-1">
          <svg width="14" height="14" viewBox="0 0 14 14"><path d="M7 1l6 6h-2v6H8V9H6v4H3V7H1z" fill="#ddd"/></svg>
        </button>
        <button class="nv nv-2">
          <svg width="10" height="14" viewBox="0 0 10 14"><path d="M8 1v12L1 7z" fill="#eee"/></svg>
          <svg width="10" height="14" viewBox="0 0 10 14"><path d="M2 1v12l7-6z" fill="#eee"/></svg>
        </button>
        <button class="nv nv-1">
          <svg width="16" height="14" viewBox="0 0 16 14"><path d="M1 7l7-5 7 5v3L8 5l-7 5zM1 12l7-5 7 5v2L8 9l-7 5z" fill="#eee"/></svg>
        </button>
      </div>
      <div class="menu">
        <span class="m-on">宣方|资讯</span><span class="m-2">平安|资讯</span>
        ${['系统', '功能', '分类', '排名', '操作'].map(t => html`<span class="m-i">${t}</span>`)}
      </div>
      <div class="btns">
        ${TOPBTN.map(([t, c, w]) => html`<span class=${`tb ${c}`} style="width:${w}px">${t}</span>`)}
      </div>
    </div>`;
  }

  private renderHeaders() {
    return html`<div class="hd hd-main">
      <div class="hd-l">
        <span class="gy">中材国际(日线.前复权) 两用主图</span>
        <span class="ye hg1">【立度】: 6.39</span>
        <span class="wh hg2">M20: 10.82</span>
        <span class="ye hg3">★强势线★: 10.74</span>
        <span class="bl hg3">: 11.09</span>
        <span class="ye hg4">分时均价线:-</span>
        <span class="gn hg3">: 11.43</span>
        <span class="pk hg6">吸:-</span>
        <span class="rd hg6">拉:-</span>
        <span class="gn hg6">派:-</span>
        <span class="wh hg6">落:-</span>
        <svg class="hd-ctl" width="26" height="10" viewBox="0 0 26 10"><path d="M5 .5l4 4.500-4 4.500L1 5z" fill="none" stroke="#c00000"/><rect x="16.500" y=".5" width="9" height="9" fill="none" stroke="#c00000"/><path d="M22 0v10" stroke="#c00000"/></svg>
      </div>
      <div class="hd-l l2">
        <span class="gy">2013/06/14/五</span>
        <span class="rd hg3">开11.36</span><span class="rd hg3">高11.81</span><span class="gn hg3">低11.31</span><span class="rd hg3">收11.75</span>
        <span class="ol hg3">里353350.7</span><span class="gy hg3">额4.11亿</span><span class="rd hg3">幅0.43(3.80%)</span>
        <span class="gy hg3">振0.50(4.42%)</span><span class="gy hg3">换3.23%</span><span class="gy hg3">流通10.9亿</span><span class="ol hg3">建筑施工</span>
      </div>
    </div>`;
  }

  private renderRight() {
    const ob = (rows: [string, string, string, string?][]) => rows.map(([l, n, p, v]) => html`
      <div class="ob ${n === '一' ? 'ob-best' : ''}">
        <span class="lb">${l}</span><span class="ob-n">${n}</span><span class="ob-p">${p}</span><span class="ob-v">${v}</span>
      </div>`);
    return html`<aside class="right">
      <div class="r-title"><span class="r-name">中材国际</span><span class="r-code">600970</span></div>
      <div class="r-quote sep">
        <span class="q-p">11.75</span><span class="q-y">元</span><span class="q-c">▲0.43</span><span class="q-r">3.80%</span>
      </div>
      <div class="r-vol sep"><span class="lb">现量</span><b class="red">249</b><span class="lb r-l2">总量</span><b class="gry">353350</b></div>
      <div class="r-asks">${ob(ASKS)}</div>
      <div class="r-bar"><i></i></div>
      <div class="r-bids sep">${ob(BIDS)}</div>
      <div class="r-stats sep">
        ${STATS.map(([a, b, c, d, e, f]) => html`<div class="st"><span class="lb">${a}</span><b class=${c}>${b}</b><span class="lb st-2">${d}</span><b class=${f}>${e}</b></div>`)}
      </div>
      <div class="r-stats2">
        ${STATS2.map(([a, b, c, d]) => html`<div class="st"><span class="lb">${a}</span><b class="gry">${b}</b><span class="lb st-2">${c}</span><b class="gry">${d}</b></div>`)}
      </div>
      <div class="r-blank sep"></div>
      <div class="r-flow sep">
        ${FLOW.map(([a, b, c]) => html`<div class="fl"><span class="lb">${a}</span><b class="red fl-v">${b}</b><b class="red fl-p">${c}</b></div>`)}
      </div>
      <div class="r-trades">
        ${TRADES.map(([t, p, v, s, c]) => html`<div class="tr">
          <b class="gry">${t}</b><b class="red tr-p">${p}</b><b class=${`tr-v ${c}`}>${v}</b><b class=${`tr-s ${s === 'S' ? 'grn' : 'red'}`}>${s}</b><span class="tr-d">—</span>
        </div>`)}
      </div>
      <div class="r-tabs">
        ${['笔', '价', '细', '盘', '势', '指', '值', '筹'].map((t, i) => html`<span class=${i === 0 ? 'on' : ''}>${t}</span>`)}
      </div>
    </aside>`;
  }

  private renderStatus() {
    const idx = (n: string, a: string, b: string, c: string, amt: string) => html`
      <span class="s-l">${n}</span><b class="s-a">${a}</b><b class="s-b">${b}</b><b class="s-c">${c}</b><span class="s-m">${amt}</span>`;
    const mini = [0, 1].map(() => html`<span class="mini">
      <span class="mini-top">${[0, 1, 2, 3, 4, 5].map(i => html`<i class=${i === 2 ? 'hot' : ''}></i>`)}</span>
      <span class="mini-dash">${[0, 1, 2, 3, 4, 5, 6].map(() => html`<i></i>`)}</span>
      <span class="mini-dash">${[0, 1, 2, 3, 4, 5, 6].map(() => html`<i></i>`)}</span>
    </span>`);
    return html`<footer class="status">
      <svg class="s-logo" width="13" height="13" viewBox="0 0 13 13"><rect width="13" height="13" fill="#e89020"/><rect x="3" y="3" width="7" height="7" fill="#ffd890"/></svg>
      <b class="s-brand">通达信</b>
      ${idx('上证', '2162.04', '13.68', '0.84%', '687.5亿')}
      ${idx('深证', '8479.46', '47.04', '0.56%', '857.4亿')}
      ${idx('中小', '4857.52', '137.90', '2.92%', '362.1亿')}
      <span class="s-div"></span>${mini}<span class="s-div"></span>
      <span class="s-vip">VIP_招商广州2</span><span class="s-time">| 17:03:29</span><span class="s-day">周六</span>
      <span class="s-icons">
        <svg width="14" height="14" viewBox="0 0 14 14"><path d="M2 7a5 5 0 019-3M12 7a5 5 0 01-9 3" fill="none" stroke="#aaa" stroke-width="2"/><path d="M11 1v4H7M3 13V9h4" fill="#aaa"/></svg>
        <svg width="15" height="13" viewBox="0 0 15 13"><rect x=".5" y=".5" width="14" height="12" fill="#f4f4f4" stroke="#88b"/><path d="M4 6h7M4 8h7" stroke="#c8a020"/></svg>
        <svg width="15" height="13" viewBox="0 0 15 13"><rect x=".5" y=".5" width="14" height="12" fill="#e8f0f8" stroke="#9ab"/><path d="M1 1l6.500 6L14 1M1 12l5-6m8 6l-5-6" stroke="#9ab" fill="none"/></svg>
        <svg width="13" height="13" viewBox="0 0 13 13"><rect x="1" y="1" width="11" height="11" rx="4" fill="#d8c820"/><path d="M6.500 3v7M4 5l2.500-2L9 5" stroke="#665" fill="none"/></svg>
        <svg width="13" height="15" viewBox="0 0 13 15"><path d="M6.500 5L3 15h7zM4 2a3 3 0 000 4m5-4a3 3 0 010 4" fill="none" stroke="#776"/></svg>
        <svg width="9" height="13" viewBox="0 0 9 13"><path d="M4.500 0l3 4h-6zM4.500 4l4 4H.5zM3 8h3v5H3z" fill="#999"/></svg>
        <svg width="4" height="13" viewBox="0 0 4 13"><path d="M1 2h2v6H1zM1 10h2v2H1z" fill="#888"/></svg>
      </span>
    </footer>`;
  }

  render() {
    return html`
      ${this.renderTop()}
      ${this.renderRibbon()}
      <div class="body">
        <div class="workspace">
          <div class="upper">
            <nav class="side">
              <div class="side-ar">
                <svg width="12" height="18" viewBox="0 0 12 18"><path d="M1 7l5-5 5 5zM1 11l5 5 5-5z" fill="#d01010"/></svg>
              </div>
              ${SIDE.map(([chars, h, on]) => html`<div class="vt ${on ? 'on' : ''}" style="height:${h}px">${chars.map(c => html`<span>${c}</span>`)}</div>`)}
            </nav>
            <div class="center">
              <section class="pane" style="height:387px">
                <div class="pane-l">${this.renderHeaders()}${mainChart()}</div>
                <div class="pane-a">
                  ${axis(81, 387, [['12.00', 106], ['11.80', 139], ['11.60', 173], ['11.40', 206], ['11.20', 240], ['10.80', 308], ['10.60', 342], ['10.40', 375], ['10.20', 409], ['10.00', 443]],
                    [122, 156, 190, 223, 257, 291, 325, 358, 392, 426, 459])}
                  <span class="price-tag">10.93</span>
                </div>
              </section>
              <section class="pane" style="height:116px">
                <div class="pane-l">
                  <div class="hd hd-one mid">
                    <span class="gy">买卖密码</span><span class="wh hg3">实际里: 353350.69</span><span class="ye hg3">预测里: 353548.81</span>
                    <span class="mg hg3">TT: 1.00</span><span class="wh hg3">密码1: 12.19</span><span class="gy hg3">密码2: 11.43</span><span class="bl hg3">换: 3.23</span>
                    <span class="wh hg3">流: 10.93</span><span class="gy hg5">: 551975.75</span><span class="gy hg3">: 360793.28</span><span class="gy hg3">: 169610.84</span>
                    <span class="cy hg3">: 475045.13</span><span class="gn hg3">: 473017.22</span><span class="mg hg3">: 4791</span>
                  </div>
                  ${midChart()}
                </div>
                <div class="pane-a">
                  ${axis(469, 116, [['90000', 485], ['60000', 514], ['30000', 543]], [499, 528, 557, 572])}
                  <span class="x10">X10</span>
                </div>
              </section>
              <section class="pane" style="height:141px">
                <div class="pane-l">
                  <div class="hd hd-one low">
                    <span class="gy">借盘下棋</span>
                    <span class="ye hg3">上面日<b>K</b>: 73.15</span><span class="ye hg3">日<b>D</b>: 68.09</span>
                    <span class="wh hg3">中间周<b>K</b>: 65.08</span><span class="wh hg3">周<b>D</b>: 49.84</span>
                    <span class="gn hg3">下面月<b>K</b>: 49.23</span><span class="gn hg3">月<b>D</b>: 42.46</span>
                    <span class="wh hg3">◎周<b>J</b>: 95.56</span>
                  </div>
                  ${lowChart()}
                </div>
                <div class="pane-a">
                  ${axis(585, 141, [['3.00', 604], ['2.00', 640], ['1.00', 675]], [622, 658, 693])}
                </div>
              </section>
              <div class="timeline">
                <div class="tl-main">
                  <span class="tl-y" style="width:148px">2013年</span><span class="tl-y" style="width:259px">3</span><span class="tl-y" style="width:219px">4</span>
                  <span class="tl-y" style="width:104px">5</span><span class="tl-date">2013/05/14/二</span><span class="tl-y" style="width:88px"></span><span class="tl-y" style="width:60px">6</span>
                </div>
                <span class="tl-side">日线</span>
              </div>
              <div class="tabs1">
                <div class="tabs1-l">${TAB1.map(([t, w, c]) => html`<span class=${`tab ${c ?? ''}`} style="width:${w}px">${t}</span>`)}</div>
                <div class="pm"><span>+</span><span>-</span><span>0</span></div>
              </div>
            </div>
          </div>
          <div class="tabs2">
            <div class="tabs2-l">${TAB2.map(([t, w, c]) => html`<span class=${`tab ${c ?? ''}`} style="width:${w}px">${t}</span>`)}</div>
            <span class="f10">图文F10</span>
          </div>
        </div>
        ${this.renderRight()}
      </div>
      ${this.renderStatus()}
      <div class="tail"></div>
      <div class="wm">
        <div class="wm-1"><b>股海网</b><span>股票软件资源分享</span></div>
        <div class="wm-2">Www.Guhai.com.cn</div>
      </div>
    `;
  }

  static styles = css`
    :host {
      display: block;
      position: relative;
      width: 1280px;
      height: 800px;
      overflow: hidden;
      background: #000;
      color: #c4c4c4;
      font: 12px "Liberation Sans", "Noto Sans CJK SC", sans-serif;
    }
    b { font-weight: 700; }
    button { background: none; padding: 0; font: inherit; color: inherit; }

    /* title bar */
    .top { display: flex; align-items: center; height: 22px; background: #0e0e0e; }
    .logo { margin: 2px 0 0 3px; flex: none; }
    .navs { display: flex; gap: 7px; margin-left: 27px; height: 22px; }
    .nv { display: flex; align-items: center; justify-content: center; height: 20px; border: 1px solid #2c2c2c; border-radius: 4px; background: #101010; }
    .nv-1 { width: 32px; }
    .nv-2 { width: 72px; justify-content: space-between; padding: 0 8px; box-sizing: border-box; }
    .menu { display: flex; align-items: center; flex: none; width: 399px; height: 22px; margin-left: 109px; padding-left: 34px; box-sizing: border-box; background: #202020;
      clip-path: polygon(0 0, 100% 0, 100% 100%, 28px 100%); font-size: 12px; color: #bbb; }
    .m-on { color: #e86a2a; width: 72px; }
    .m-2 { width: 72px; }
    .m-i { width: 42px; }
    .btns { display: flex; gap: 3px; align-items: center; height: 22px; flex: 1; background: #202020; overflow: hidden; }
    .tb { flex: none; height: 16px; line-height: 16px; text-align: center; font-size: 12px; color: #222; border-radius: 2px; }
    .b-or { background: linear-gradient(#f0a838, #d88820); }
    .b-bl { background: linear-gradient(#9ed0ff, #68aef0); }
    .b-ye { background: linear-gradient(#e8f040, #c8d020); }
    .b-pk { background: linear-gradient(#ff9a90, #f06860); }

    /* ribbon */
    .ribbon { display: grid; grid-template-columns: 87px 58px 83px 84px 90px 42px 42px 82px 84px 85px 90px 38px 89px 44px 47px 43px 39px 1fr;
      height: 58px; padding: 1px 0 0 8px; box-sizing: border-box; background: #222; border-top: 1px solid #2e2e2e; font-size: 12px; color: #c8c8c8; }
    .rb-col { display: flex; flex-direction: column; }
    .rb-row { display: flex; align-items: center; height: 18.5px; white-space: nowrap; }
    .rb-ic { display: block; width: 18px; height: 16px; flex: none; }
    .ic { display: block; }
    .rb-big { display: flex; flex-direction: column; align-items: flex-start; }
    .rb-img { height: 37px; }
    .rb-big span { height: 18px; line-height: 18px; white-space: nowrap; }

    /* body */
    .body { display: flex; height: 697px; border-top: 1px solid #000; }
    .workspace { width: 1086px; flex: none; display: flex; flex-direction: column; }
    .upper { display: flex; height: 679px; }
    .side { width: 18px; flex: none; border-right: 1px solid #b00000; box-sizing: border-box; }
    .side-ar { height: 23px; display: flex; align-items: center; justify-content: center; border: 1px solid #a00000; box-sizing: border-box; }
    .vt { display: flex; flex-direction: column; align-items: center; justify-content: center; border-bottom: 1px solid #a00000; box-sizing: border-box; font-size: 12.5px; line-height: 12.5px; color: #c0c0c0; }
    .vt span { white-space: nowrap; }
    .vt.on { color: #40f0f0; }
    .center { width: 1068px; flex: none; display: flex; flex-direction: column; }
    .pane { display: flex; box-sizing: border-box; border-bottom: 1px solid #c00000; }
    .pane-l { width: 1016px; flex: none; display: flex; flex-direction: column; overflow: hidden; }
    .pane-a { position: relative; width: 52px; flex: none; }
    .chart, .axis { display: block; }
    .chart { flex: none; }
    .chart rect, .chart polyline, .chart polygon, .chart line, .chart circle, .chart path { shape-rendering: crispEdges; }
    .t-grey { font-size: 14px; fill: #c0c0c0; }
    .t-s { font-size: 12px; font-weight: 700; fill: #f00000; }
    .t-mark { font-size: 26px; font-weight: 700; fill: #e80000; stroke: #700000; stroke-width: 0.5px; paint-order: stroke; }
    .t-axis { font-size: 13px; fill: #e83030; }
    .price-tag { position: absolute; left: 1px; top: 189px; width: 50px; height: 16px; line-height: 16px; background: #000080; color: #c8d0ff; font-size: 13px; padding-left: 1px; box-sizing: border-box; box-shadow: 0 0 0 1px #900 inset; }
    .x10 { position: absolute; left: 2px; top: 96px; width: 23px; height: 15px; line-height: 14px; text-align: center; border: 1px solid #c00000; color: #e83030; box-sizing: border-box; }

    /* pane headers */
    .hd { white-space: nowrap; font-size: 12px; line-height: 14px; flex: none; }
    .hd-main { height: 29px; padding-left: 2px; }
    .hd-l { display: flex; align-items: center; height: 15px; position: relative; }
    .hd-one { display: flex; align-items: center; height: 18px; }
    .hd span { flex: none; }
    .hd b { font-weight: 700; font-family: "Liberation Serif", serif; }
    .hd-ctl { position: absolute; right: 1px; top: 3px; }
    .gy { color: #c4c4c4; } .wh { color: #fff; } .ye { color: #ffff00; } .bl { color: #1010ff; } .gn { color: #00f000; }
    .rd { color: #ff2020; } .pk { color: #ff6060; } .ol { color: #c8c800; } .mg { color: #ff30ff; } .cy { color: #30e8f0; }
    .hg1 { margin-left: 6px; } .hg2 { margin-left: 104px; } .hg3 { margin-left: 5px; } .hg4 { margin-left: 75px; } .hg5 { margin-left: 64px; } .hg6 { margin-left: 9px; }
    .l2 .hg3 { margin-left: 4px; }
    .mid .hg3 { margin-left: 6px; }
    .low .hg3 { margin-left: 8px; }

    /* timeline + tabs */
    .timeline { display: flex; height: 17px; border-bottom: 1px solid #c00000; box-sizing: border-box; }
    .tl-main { width: 1016px; flex: none; display: flex; color: #e83030; font-size: 12px; line-height: 16px; box-sizing: border-box; }
    .tl-y { flex: none; border-right: 1px solid #b00000; box-sizing: border-box; padding-left: 4px; }
    .tl-date { flex: none; width: 78px; text-align: center; background: #000090; color: #c8d0ff; white-space: nowrap; }
    .tl-side { width: 51px; text-align: center; line-height: 16px; font-size: 13px; border-left: 1px solid #c00000; border-right: 1px solid #c00000; }
    .tabs1 { display: flex; height: 17px; }
    .tabs1-l { width: 1016px; flex: none; display: flex; overflow: hidden; background: #1c1c1c; }
    .tab { flex: none; height: 100%; display: flex; align-items: center; justify-content: center; border-right: 1px solid #a00000; box-sizing: border-box; font-size: 13px; color: #c8c8c8; white-space: nowrap; }
    .tabs1-l .tab { font-size: 12.5px; }
    .tabs1-l .tab.nr { font-size: 10.5px; }
    .tab.sel { background: #666; }
    .tab.cy { color: #20f0f0; }
    .tab.ol { color: #d0d000; }
    .pm { display: grid; grid-template-columns: 17px 17px 18px; width: 52px; border: 1px solid #c00000; border-width: 0 1px 1px 1px; box-sizing: border-box; font-size: 12px; text-align: center; line-height: 16px; }
    .pm span { border-right: 1px solid #a00000; }
    .tabs2 { display: flex; height: 18px; border-top: 1px solid #a00000; border-bottom: 1px solid #a00000; box-sizing: border-box; background: #1c1c1c; }
    .tabs2-l { display: flex; width: 1036px; flex: none; }
    .f10 { width: 49px; text-align: center; font-size: 12px; line-height: 16px; border-left: 1px solid #c00000; background: #000; white-space: nowrap; }

    /* right panel */
    .right { flex: 1; display: flex; flex-direction: column; font-size: 14px; }
    .lb { font-size: 15px; font-weight: 400; color: #c0c0c0; white-space: nowrap; }
    .red { color: #ff3030; } .grn { color: #00f000; } .gry { color: #c4c4c4; } .r-trades .ol { color: #c8c800; } .r-trades .mg { color: #c000c0; }
    .sep { border-bottom: 1px solid #b00000; box-sizing: border-box; }
    .r-title { height: 27px; display: flex; align-items: center; padding-left: 37px; }
    .r-name { font-size: 21px; color: #ff7f3c; width: 91px; white-space: nowrap; }
    .r-code { font-size: 16px; font-weight: 700; color: #b8b8b8; letter-spacing: 0.4px; }
    .r-quote { height: 27px; display: flex; align-items: center; padding-left: 2px; font-weight: 700; color: #ff3030; }
    .q-p { font-size: 18px; width: 44px; }
    .q-y { font-size: 16px; font-weight: 400; color: #ccc; width: 25px; }
    .q-c { font-size: 16px; width: 75px; white-space: nowrap; }
    .q-r { font-size: 16px; white-space: nowrap; }
    .r-vol { height: 21px; display: grid; grid-template-columns: 32px 57px 50px 1fr; align-items: center; padding: 0 5px 0 2px; text-align: right; border-bottom-color: #d00000; }
    .r-vol .lb { text-align: left; }
    .r-l2 { padding-left: 8px; }
    .r-asks { height: 93px; box-sizing: border-box; }
    .r-bids { height: 90px; }
    .ob { display: grid; grid-template-columns: 36px 16px 62px 73px; height: 18px; align-items: center; padding-left: 2px; font-weight: 700; }
    .r-asks .ob-best { height: 19px; }
    .ob-n { font-size: 15px; font-weight: 400; color: #c0c0c0; }
    .ob-p { text-align: right; color: #ff3030; }
    .ob-v { text-align: right; color: #c8c800; }
    .ob-best .ob-p { font-size: 18px; margin-right: -3px; }
    .r-bar { height: 3px; background: #00e000; flex: none; }
    .r-bar i { display: block; width: 13px; height: 3px; background: #e02020; }
    .r-stats { height: 79px; padding-top: 1px; }
    .r-stats2 { height: 57px; }
    .st { display: grid; grid-template-columns: 32px 57px 51px 48px; height: 19px; align-items: center; padding-left: 2px; text-align: right; white-space: nowrap; }
    .st .lb { text-align: left; }
    .st-2 { padding-left: 8px; }
    .r-blank { height: 53px; }
    .r-flow { height: 77px; }
    .fl { display: flex; align-items: center; height: 19px; padding: 0 1px 0 2px; }
    .fl-v { margin-left: auto; }
    .fl-p { width: 40px; text-align: right; }
    .fl .lb { font-size: 15.5px; }
    .r-trades { height: 150px; padding-top: 1px; box-sizing: border-box; }
    .tr { display: grid; grid-template-columns: 52px 38px 50px 18px 1fr; height: 18px; align-items: center; padding-left: 2px; }
    .tr-p { text-align: left; }
    .tr-v { text-align: right; }
    .tr-s { text-align: right; padding-left: 8px; }
    .tr-d { text-align: center; font-size: 9px; padding-left: 8px; color: #888; }
    .r-tabs { display: grid; grid-template-columns: repeat(8, 24px); height: 17px; flex: none; font-size: 14px; border-top: 1px solid #b00000; border-bottom: 1px solid #b00000; box-sizing: border-box; margin-left: 1px; }
    .r-tabs span { text-align: center; line-height: 15px; border-right: 1px solid #b00000; }
    .r-tabs .on { color: #20f0f0; background: #1a2a2a; }

    /* status bar */
    .status { display: flex; align-items: center; height: 19px; padding-left: 3px; background: #1a1a1a; white-space: nowrap; color: #eee; font-size: 13px; }
    .s-logo { flex: none; }
    .s-brand { color: #f06a20; font-size: 13.5px; width: 42px; margin-left: 4px; }
    .s-l { width: 25px; font-size: 12.5px; color: #fff; }
    .s-a, .s-b, .s-c { color: #ff2020; font-size: 12.5px; }
    .s-a { width: 54px; } .s-b { width: 37px; text-align: right; margin-right: 7px; } .s-c { width: 36px; text-align: right; }
    .s-m { width: 50px; text-align: right; margin-right: 6px; font-size: 12.5px; }
    .s-div { width: 1px; height: 19px; background: #444; margin: 0 4px; }
    .mini { display: flex; flex-direction: column; gap: 1px; width: 49px; margin-right: 3px; }
    .mini-top { display: flex; height: 6px; border: 1px solid #ccc; background: #000; }
    .mini-top i { flex: 1; border-right: 1px solid #999; }
    .mini-top i.hot { background: linear-gradient(90deg, #d00 50%, #0a0 50%); }
    .mini-dash { display: flex; gap: 1px; height: 2px; }
    .mini-dash i { flex: 1; background: #f01010; }
    .s-vip { font-size: 12px; color: #ddd; width: 86px; }
    .s-time { font-size: 12px; color: #ddd; width: 66px; }
    .s-day { font-size: 12px; color: #ddd; }
    .s-icons { display: flex; align-items: center; gap: 5px; margin-left: auto; margin-right: 8px; }
    .tail { height: 3px; background: #c8c8c8; border-top: 1px solid #555; box-sizing: border-box; }

    /* site watermark pasted over the corner */
    .wm { position: absolute; left: 1058px; top: 2px; width: 220px; height: 55px; background: rgba(255, 255, 255, 0.86); box-sizing: border-box; padding: 1px 0 0 4px; }
    .wm-1 { display: flex; align-items: center; height: 26px; white-space: nowrap; }
    .wm-1 b { font-size: 21px; color: #0a28e8; width: 64px; }
    .wm-1 span { font-size: 17.5px; font-weight: 700; color: #444; font-family: "Noto Sans CJK SC", sans-serif; margin-left: 4px; }
    .wm-2 { font-size: 22.5px; font-weight: 700; color: #e83010; white-space: nowrap; }
  `;
}
